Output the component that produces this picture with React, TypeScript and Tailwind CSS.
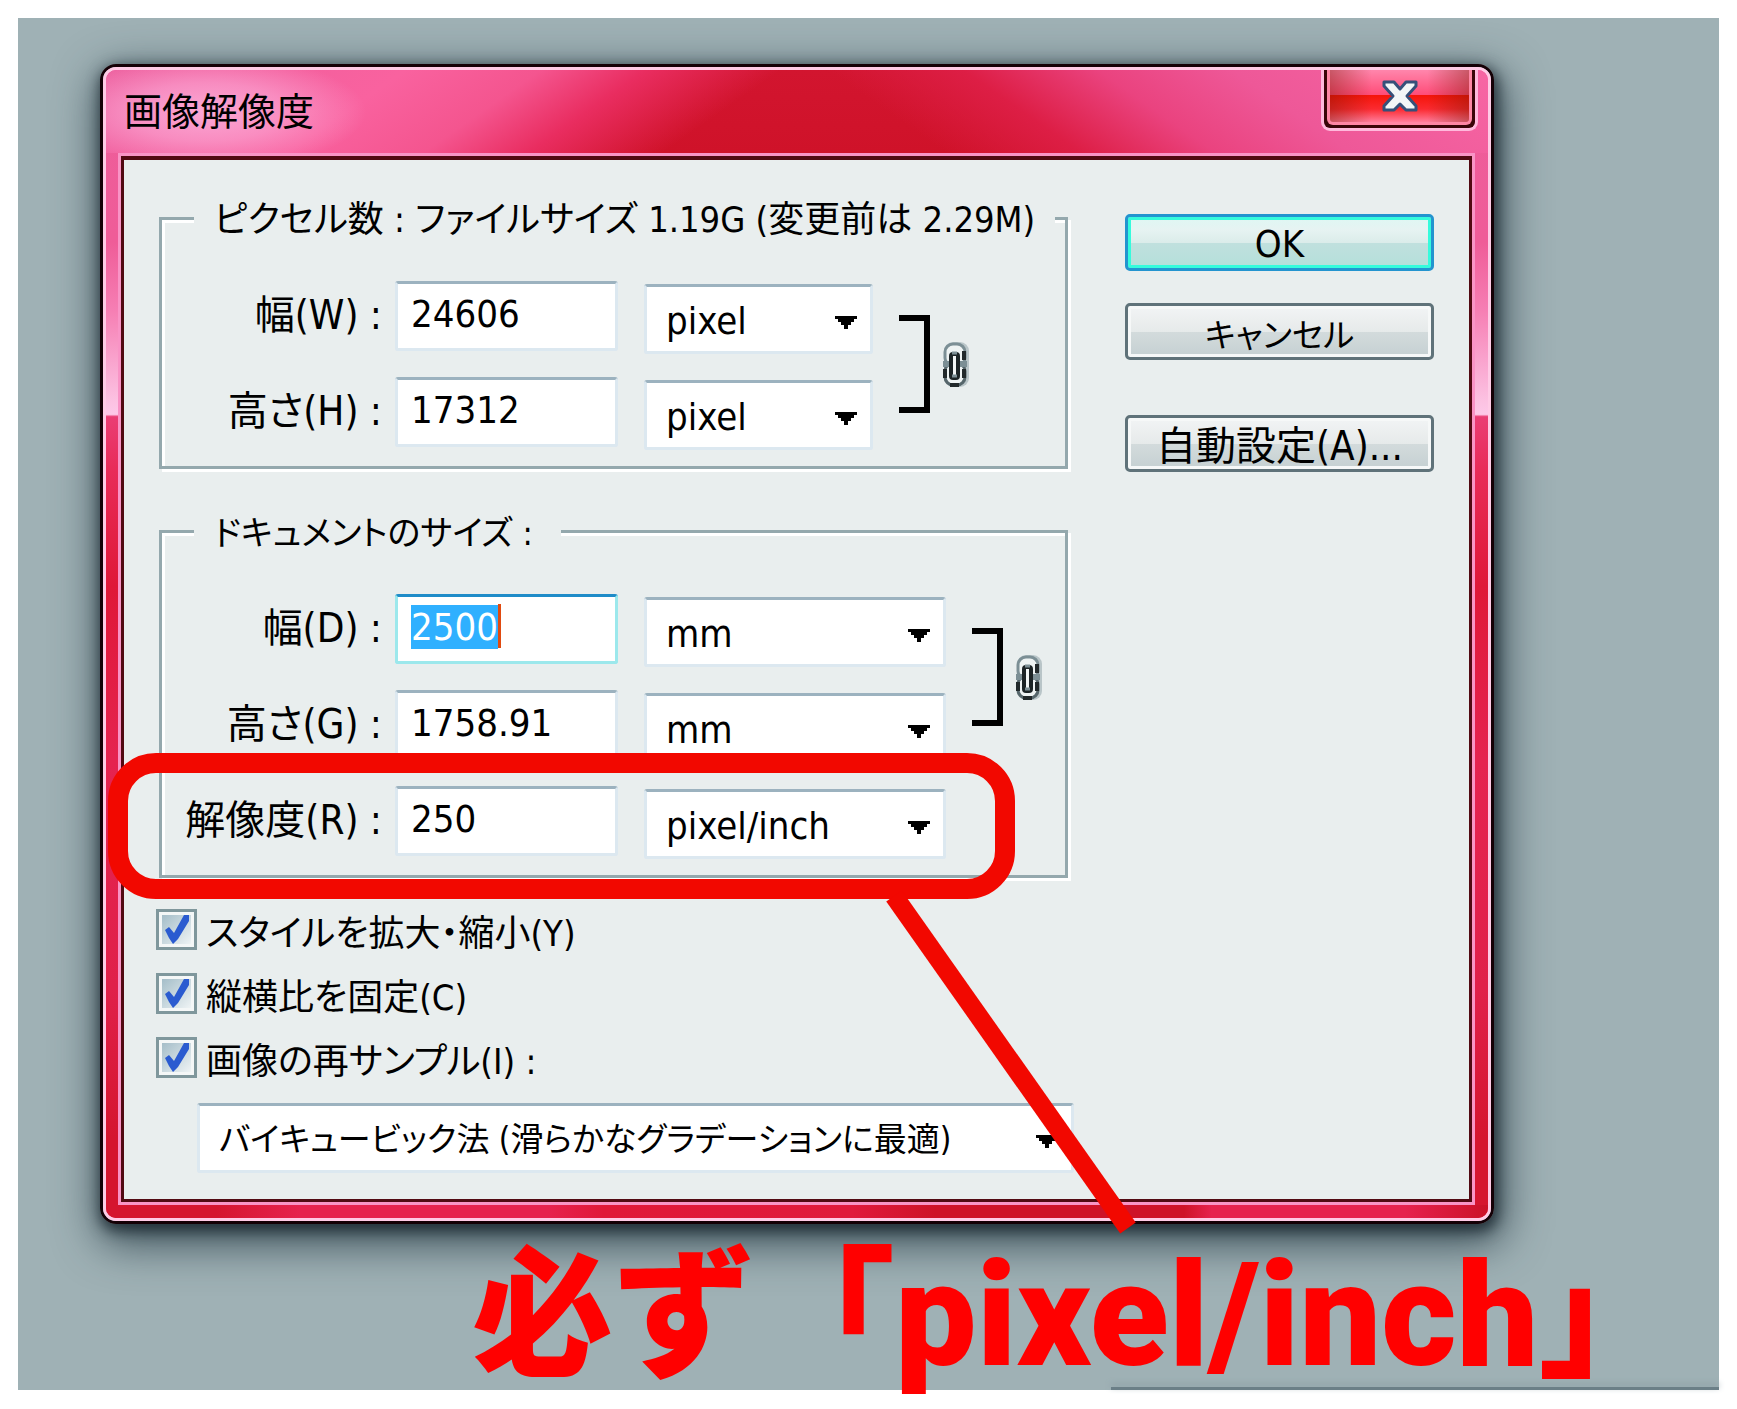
import React, { useEffect, useRef } from 'react';

const Arrow: React.FC = () => (
  <svg className="pointer-events-none absolute right-4 top-8 h-[13px] w-[22px]" viewBox="0 0 22 13" aria-hidden="true">
    <path d="M0 0h22v3h-3v3h-3v3h-3v4H9V9H6V6H3V3H0z" fill="#000" />
  </svg>
);

interface SelectBoxProps {
  label: string;
  options: string[];
  className: string;
}

const SelectBox: React.FC<SelectBoxProps> = ({ label, options, className }) => (
  <div className={`relative ${className}`}>
    <select
      aria-label={label}
      className="block h-[70px] w-full appearance-none rounded-[3px] border-[3px] border-[#dce8f0] border-t-[#9cb2bf] bg-white pl-[19px] pr-12 pt-1"
    >
      {options.map((option) => (
        <option key={option}>{option}</option>
      ))}
    </select>
    <Arrow />
  </div>
);

interface FieldRowProps {
  id: string;
  label: string;
  value: string;
  unit: string;
  selectClass: string;
  active?: boolean;
}

const FieldRow: React.FC<FieldRowProps> = ({ id, label, value, unit, selectClass, active }) => {
  const inputRef = useRef<HTMLInputElement>(null);

  useEffect(() => {
    if (active) {
      inputRef.current?.focus();
      inputRef.current?.select();
    }
  }, [active]);

  return (
    <div className="flex h-[70px]">
      <label
        htmlFor={id}
        className="flex h-[68px] w-[220px] items-center justify-end whitespace-pre text-[40px]"
      >
        {label} :
      </label>
      <div className="relative ml-[13px] w-[223px]">
        <input
          ref={inputRef}
          id={id}
          type="text"
          defaultValue={value}
          className="block h-[70px] w-full rounded-[3px] border-[3px] border-[#dce8f0] border-t-[#9cb2bf] bg-white pb-1 pl-[13px] outline-none selection:bg-[#2fb0ff] selection:text-white focus:border-[#9ce8ec] focus:border-t-[#1f8cc8]"
        />
        {active && <span className="absolute left-[103px] top-[10px] h-11 w-[3px] bg-[#e04a10]" />}
      </div>
      <SelectBox label={`${label} unit`} options={[unit]} className={`ml-[26px] mt-[3px] ${selectClass}`} />
    </div>
  );
};

const LinkMark: React.FC = () => (
  <div className="ml-[26px] flex items-center gap-[13px]">
    <svg className="h-[98px] w-[31px]" viewBox="0 0 31 98" aria-hidden="true">
      <path d="M0 3h28v92H0" fill="none" stroke="#000" strokeWidth="6" />
    </svg>
    <svg className="h-[45px] w-[26px]" viewBox="0 0 26 45" fill="none" aria-hidden="true">
      <rect x="1" y="0" width="25" height="45" rx="9" fill="#b9c5c8" />
      <rect x="2" y="2" width="20" height="22" rx="8" fill="#eef3f3" stroke="#7c8f95" strokeWidth="3" />
      <rect x="2" y="21" width="20" height="22" rx="8" fill="#eef3f3" stroke="#56666b" strokeWidth="3" />
      <path d="M21 9v9M2 27v9M21 27v9M7 43h9" stroke="#22292b" strokeWidth="4" />
      <path d="M0 22h7M16 22h8" stroke="#7c8f95" strokeWidth="6" />
      <rect x="8" y="12" width="7" height="24" rx="2" fill="#f2f6f6" stroke="#1c2426" strokeWidth="4" />
      <path d="M9 11h5M9 34h5" stroke="#7c8f95" strokeWidth="3" />
    </svg>
  </div>
);

interface CheckRowProps {
  id: string;
  label: string;
}

const CheckRow: React.FC<CheckRowProps> = ({ id, label }) => (
  <div className="flex h-[41px] items-center gap-[9px]">
    <div className="relative h-[41px] w-[41px]">
      <input
        id={id}
        type="checkbox"
        defaultChecked
        className="peer block h-[41px] w-[41px] appearance-none border-[3px] border-[#7f979c] bg-linear-to-br from-[#9db8c4] to-[#f6f9f9] shadow-[inset_0_0_0_3px_#f4f7f7]"
      />
      <svg
        className="pointer-events-none absolute left-[7px] top-[5px] hidden h-[31px] w-[28px] peer-checked:block"
        viewBox="0 0 28 31"
        aria-hidden="true"
      >
        <path d="M2 16l4-3 5 6L21 1h5v6L15 25l-5 5-4-6z" fill="#2a5bd0" />
      </svg>
    </div>
    <label htmlFor={id} className="whitespace-pre pt-2 text-[36px]">
      {label}
    </label>
  </div>
);

interface GroupProps {
  title: string;
  titleClass: string;
  children: React.ReactNode;
}

const Group: React.FC<GroupProps> = ({ title, titleClass, children }) => (
  <fieldset className="ml-[3px] mr-[6px] min-w-0 border-[3px] border-[#94a8ad] pb-[19px] shadow-[3px_3px_0_#fff,inset_3px_3px_0_#fff]">
    <legend className={`ml-8 h-14 whitespace-pre bg-[#e9eeee] pl-5 leading-[60px] ${titleClass}`}>{title}</legend>
    <div className="pt-[35px]">{children}</div>
  </fieldset>
);

const pushButton =
  'h-[57px] w-full rounded-[5px] border-[3px] border-[#5f7279] bg-[linear-gradient(#f2f4f5,#e6eaea_50%,#d3dbdc_51%,#c5d0d2)] shadow-[inset_0_0_0_3px_#f6f8f8]';

const App: React.FC = () => {
  return (
    <div className="bg-white px-[18px] pb-[19px] pt-[18px]">
      <main className="flex flex-col bg-[#9fb1b5] font-['DejaVu_Sans_Condensed','Noto_Sans_CJK_JP',sans-serif] text-[38px] leading-[44px] text-black [font-feature-settings:'palt']">
        <section
          role="dialog"
          aria-labelledby="dialog-title"
          className="relative ml-[82px] mr-[225px] mt-[46px] rounded-[16px] border-[3px] border-[#150006] shadow-[2px_5px_14px_2px_rgba(20,32,40,0.75),4px_14px_44px_6px_rgba(30,50,60,0.75)]"
        >
          <div className="rounded-[13px] border-[3px] border-[#ffcbe6] bg-[linear-gradient(#ee5d9b,#ef5c98_15%,#f67fb4_21%,#fcc3e3_29%,#fdc8e8_30%,#ea3d74_30.2%,#e82b58_35%,#df1838_45%,#e52350_60%,#e0204a_80%,#d5152f_93%)]">
            <header className="flex h-[83px] items-start justify-between rounded-t-[10px] bg-[radial-gradient(ellipse_160px_58px_at_100px_42px,rgba(252,180,222,0.85),rgba(252,170,215,0.6)_50%,transparent),linear-gradient(145deg,#ec5d9c,#f9629f_20%,#f4558f_29%,#e92d60_36%,rgba(208,19,43,0)_45%),linear-gradient(35deg,rgba(208,19,43,0)_56%,#dd1e45_65%,#ea437f_74%,#ee5898_83%,#f766a4),linear-gradient(#d2152f,#cf1229)]">
              <h1 id="dialog-title" className="ml-[18px] mt-5">
                画像解像度
              </h1>
              <button
                type="button"
                aria-label="閉じる"
                className="mr-[10px] h-[61px] w-[157px] rounded-b-[9px] border-[3px] border-t-0 border-[#ffb9dc] bg-[#3a0508] px-[3px] pb-[3px]"
              >
                <span className="flex h-full items-center justify-center rounded-b-[6px] border-[3px] border-t-0 border-[#ff86a4] bg-[linear-gradient(90deg,rgba(120,20,0,0.4),transparent_30%,transparent_70%,rgba(120,20,0,0.4)),linear-gradient(#ff86ac,#ff4c78_48%,#f5150a_49%,#fb2a30_75%,#ff7d9b)]">
                  <svg className="h-8 w-9" viewBox="0 0 36 32" aria-hidden="true">
                    <path
                      d="M2 2h10l6 7 6-7h10v4l-9 10 9 10v4H24l-6-6-6 6H2v-4l9-10L2 6z"
                      fill="#f3f6f7"
                      stroke="#37507a"
                      strokeWidth="3"
                      strokeLinejoin="round"
                    />
                  </svg>
                </span>
              </button>
            </header>
            <div className="ml-3 mr-[13px] border-[3px] border-[#f994c6]">
              <div className="flex items-start gap-[51px] border-[3px] border-t-[4px] border-[#520a12] bg-[#e9eeee] pb-[26px] pl-8 pr-[35px] pt-[30px]">
                <form className="min-w-0 flex-1">
                  <Group title="ピクセル数 : ファイルサイズ 1.19G (変更前は 2.29M)" titleClass="pr-5 text-[36px]">
                    <div className="flex">
                      <div className="flex flex-col gap-[26px]">
                        <FieldRow id="px-width" label="幅(W)" value="24606" unit="pixel" selectClass="w-[229px]" />
                        <FieldRow id="px-height" label="高さ(H)" value="17312" unit="pixel" selectClass="w-[229px]" />
                      </div>
                      <LinkMark />
                    </div>
                  </Group>
                  <div className="h-[34px]" />
                  <Group title="ドキュメントのサイズ :" titleClass="pr-7 text-[34px]">
                    <div className="flex">
                      <div className="flex flex-col gap-[26px]">
                        <FieldRow id="doc-width" label="幅(D)" value="2500" unit="mm" selectClass="w-[302px]" active />
                        <FieldRow id="doc-height" label="高さ(G)" value="1758.91" unit="mm" selectClass="w-[302px]" />
                      </div>
                      <LinkMark />
                    </div>
                    <div className="relative mt-[26px] w-fit">
                      <FieldRow id="resolution" label="解像度(R)" value="250" unit="pixel/inch" selectClass="w-[302px]" />
                      <div className="pointer-events-none absolute -bottom-[43px] -left-[54px] -right-[69px] -top-[33px] z-10 rounded-[48px] border-[20px] border-[#f20800]" />
                      <svg
                        className="pointer-events-none absolute left-[718px] top-[104px] z-10 h-[350px] w-[260px]"
                        viewBox="0 0 260 350"
                        aria-hidden="true"
                      >
                        <path d="M14 6L248 338" stroke="#f20800" strokeWidth="19" />
                      </svg>
                    </div>
                  </Group>
                  <div className="mt-[31px] flex flex-col gap-[23px]">
                    <CheckRow id="scale-styles" label="スタイルを拡大・縮小(Y)" />
                    <CheckRow id="constrain" label="縦横比を固定(C)" />
                    <CheckRow id="resample" label="画像の再サンプル(I) :" />
                  </div>
                  <SelectBox
                    label="再サンプル方式"
                    options={['バイキュービック法 (滑らかなグラデーションに最適)']}
                    className="ml-[41px] mt-[25px] text-[33px]"
                  />
                </form>
                <div className="mt-6 flex w-[309px] flex-col">
                  <button
                    type="button"
                    className="h-[57px] w-full rounded-[5px] border-[3px] border-[#2394cf] bg-[linear-gradient(#def7f3,#e6f3f2_25%,#dbecea_50%,#c0e0de_51%,#b4e0da)] pt-[2px] shadow-[inset_0_0_0_3px_#35fbdc]"
                  >
                    OK
                  </button>
                  <button type="button" className={`mt-8 pt-2 text-[33px] ${pushButton}`}>
                    キャンセル
                  </button>
                  <button type="button" className={`mt-[55px] pt-1 text-[40px] ${pushButton}`}>
                    自動設定(A)...
                  </button>
                </div>
              </div>
            </div>
            <div className="h-[13px] rounded-b-[10px] bg-[linear-gradient(90deg,#d5152f_8%,#e6224e_14%,#e6224e_32%,#e01838_36%,#e01a3c_54%,#ce1228_60%,#ce1228_78%,#e6224e_80%,#e6224e_94%,#cb1128)]" />
          </div>
        </section>
        <p className="relative z-10 h-[163px] whitespace-nowrap pl-[454px] font-['Noto_Sans_CJK_JP',sans-serif] text-[141px] font-black leading-[160px] text-[#f00] [font-feature-settings:normal]">
          必ず「<span className="font-['Roboto',sans-serif] text-[145px]">pixel/inch</span>」
        </p>
        <div className="ml-[1093px] h-[3px] bg-[#6b7f87] shadow-[0_-3px_6px_#8b9da3]" />
      </main>
    </div>
  );
};

export default App;
